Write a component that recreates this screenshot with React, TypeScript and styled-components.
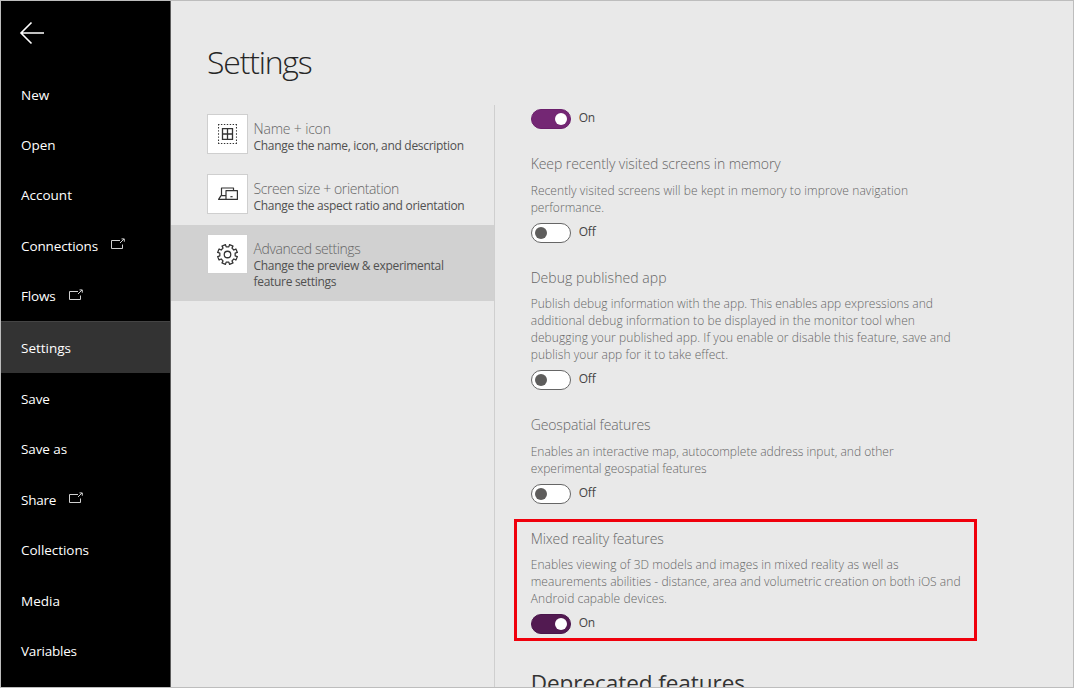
import React from "react";
import styled, { createGlobalStyle, css } from "styled-components";

const GlobalStyle = createGlobalStyle`
  * { box-sizing: border-box; }
  body { margin: 0; overflow: hidden; }
`;

const Frame = styled.div`
  display: flex;
  width: 1074px;
  height: 688px;
  overflow: hidden;
  border: 1px solid #bdbdbd;
  background: #e9e9e9;
  font-family: "Open Sans", "Noto Sans", sans-serif;
`;

const Sidebar = styled.nav`
  flex: none;
  width: 170px;
  background: #000;
  border-right: 1px solid #5c5c5c;
`;

const BackButton = styled.div`
  height: 68px;
  padding: 20px 0 0 18px;
  line-height: 0;
`;

const NavItem = styled.div<{ $active?: boolean }>`
  display: flex;
  align-items: center;
  gap: 13px;
  height: 50.4px;
  padding: 1px 0 0 20px;
  color: #fff;
  font-size: 13.5px;
  white-space: nowrap;
  ${(p) =>
    p.$active &&
    css`
      height: 52px;
      padding-top: 2px;
      margin-bottom: 0.4px;
      background: #333;
      border-top: 1px solid #444;
    `}
  svg { margin-top: -3px; }
`;

const Line = styled.span<{ $track?: number }>`
  display: block;
  width: max-content;
  white-space: nowrap;
  letter-spacing: ${(p) => p.$track ?? 0}px;
`;

const Main = styled.main`
  flex: 1;
  display: flex;
  flex-direction: column;
  min-width: 0;
`;

const Title = styled.h1`
  height: 104px;
  margin: 0;
  padding: 38px 0 0 36px;
  font-size: 32px;
  line-height: 46px;
  font-weight: 300;
  color: #262626;
`;

const Columns = styled.div`
  flex: 1;
  display: flex;
  min-height: 0;
`;

const Categories = styled.div`
  flex: none;
  width: 324px;
  border-right: 1px solid #cfcfcf;
`;

const Category = styled.div<{ $active?: boolean }>`
  display: flex;
  gap: 5.5px;
  height: ${(p) => (p.$active ? 76 : 60)}px;
  padding: 9px 0 0 36px;
  background: ${(p) => (p.$active ? "#d1d1d1" : "transparent")};
`;

const IconTile = styled.div`
  display: flex;
  align-items: center;
  justify-content: center;
  flex: none;
  width: 41px;
  height: 40px;
  background: #fff;
  border: 1px solid #cfcfcf;
`;

const CategoryText = styled.div`
  padding-top: 6px;
  color: #505050;
  font-size: 12px;
  line-height: 16px;
`;

const CategoryName = styled.div`
  height: 17.5px;
  font-size: 14px;
  line-height: 18px;
  font-weight: 300;
  color: #666;
`;

const Features = styled.div`
  flex: 1;
  padding: 4px 0 0 35.7px;
  overflow: hidden;
`;

const Section = styled.section`
  position: relative;
  padding-top: 22px;
`;

const Heading = styled.h2`
  margin: 0;
  height: 24px;
  font-size: 14px;
  line-height: 24px;
  font-weight: 300;
  color: #666;
`;

const Description = styled.div`
  padding: 5.5px 0 7px;
  font-size: 12px;
  line-height: 17px;
  font-weight: 300;
  color: #666;
`;

const ToggleRow = styled.div`
  display: flex;
  gap: 8px;
  height: 20px;
  margin-bottom: 1px;
  font-size: 12px;
  line-height: 17px;
  letter-spacing: -0.2px;
  color: #444;
`;

const Track = styled.span<{ $on?: boolean; $pressed?: boolean }>`
  display: flex;
  align-items: center;
  justify-content: ${(p) => (p.$on ? "flex-end" : "flex-start")};
  width: 40px;
  height: 20px;
  padding: 0 3px;
  border-radius: 10px;
  border: 1px solid ${(p) => (p.$on ? (p.$pressed ? "#4a154b" : "#6b1f6c") : "#666")};
  background: ${(p) => (p.$on ? (p.$pressed ? "#521a51" : "#742774") : "#fff")};
`;

const Knob = styled.span<{ $on?: boolean }>`
  width: 12px;
  height: 12px;
  border-radius: 50%;
  background: ${(p) => (p.$on ? "#fff" : "#5e5d5c")};
`;

const Highlight = styled.div`
  position: absolute;
  left: -16.7px;
  top: 14.5px;
  width: 463px;
  height: 122px;
  border: 3px solid #f0000c;
`;

const GroupTitle = styled.h1`
  margin: 33px 0 0;
  font-size: 22.5px;
  line-height: 32px;
  font-weight: 400;
  color: #333;
`;

const ExternalIcon = () => (
  <svg width="14" height="12" viewBox="0 0 14 12" fill="none" stroke="#d0d0d0" strokeWidth="1">
    <path d="M9 2.5H.5v8h11V6.5M9 5l4-4M10.5 .9h2.8v2.8" />
  </svg>
);

const GridIcon = () => (
  <svg width="19" height="20" viewBox="0 0 19 20" fill="none" stroke="#333">
    <path d="M0 .5h19M0 19.5h19" strokeDasharray="1.4 1.53" strokeWidth="1.1" />
    <path d="M.5 0v20M18.5 0v20" strokeDasharray="1.4 1.7" strokeWidth="1.1" />
    <path d="M4.5 4.6h10v10.8h-10zM9.5 4.6v10.8M4.5 10h10" strokeWidth="1.3" />
  </svg>
);

const DevicesIcon = () => (
  <svg width="20" height="14" viewBox="0 0 20 14" fill="none" stroke="#333" strokeWidth="1.2">
    <path d="M3.5 8.6V1h12v2.5M7.5 8.6H3L.6 12.4h7M8 3.6h11.4v8.8H8z" strokeLinejoin="round" />
    <path d="M12.4 9.7h2.2" />
  </svg>
);

const GearIcon = () => {
  const teeth = 8;
  const points: string[] = [];
  for (let i = 0; i < teeth; i++) {
    const base = ((i + 0.5) * 2 * Math.PI) / teeth;
    [[-0.22, 7.4], [-0.19, 9.6], [0.19, 9.6], [0.22, 7.4]].forEach(([a, r]) => {
      points.push(`${(10 + r * Math.sin(base + a)).toFixed(2)},${(10 - r * Math.cos(base + a)).toFixed(2)}`);
    });
  }
  return (
    <svg width="21" height="21" viewBox="0 0 20 20" fill="none" stroke="#333" strokeWidth="1.2" strokeLinejoin="round">
      <polygon points={points.join(" ")} />
      <circle cx="10" cy="10" r="3.1" />
    </svg>
  );
};

type TextLine = [text: string, track: number];

const Lines = ({ items }: { items: TextLine[] }) => (
  <>
    {items.map(([text, track]) => (
      <Line key={text} $track={track}>{text}</Line>
    ))}
  </>
);

const Toggle = ({ on, pressed }: { on?: boolean; pressed?: boolean }) => (
  <ToggleRow>
    <Track $on={on} $pressed={pressed}><Knob $on={on} /></Track>
    {on ? "On" : "Off"}
  </ToggleRow>
);

const nav: { label: string; track: number; external?: boolean; active?: boolean }[] = [
  { label: "New", track: 0 },
  { label: "Open", track: 0 },
  { label: "Account", track: 0 },
  { label: "Connections", track: -0.12, external: true },
  { label: "Flows", track: -0.15, external: true },
  { label: "Settings", track: 0, active: true },
  { label: "Save", track: -0.1 },
  { label: "Save as", track: -0.1 },
  { label: "Share", track: -0.25, external: true },
  { label: "Collections", track: -0.05 },
  { label: "Media", track: 0 },
  { label: "Variables", track: -0.2 },
];

const categories: { name: TextLine; icon: React.ReactNode; lines: TextLine[]; active?: boolean }[] = [
  { name: ["Name + icon", -0.17], icon: <GridIcon />, lines: [["Change the name, icon, and description", -0.3]] },
  { name: ["Screen size + orientation", -0.4], icon: <DevicesIcon />, lines: [["Change the aspect ratio and orientation", -0.29]] },
  {
    name: ["Advanced settings", -0.42],
    icon: <GearIcon />,
    active: true,
    lines: [["Change the preview & experimental", -0.3], ["feature settings", -0.3]],
  },
];

const features: { title: TextLine; lines: TextLine[]; on?: boolean }[] = [
  {
    title: ["Keep recently visited screens in memory", -0.07],
    lines: [["Recently visited screens will be kept in memory to improve navigation", 0.08], ["performance.", 0.04]],
  },
  {
    title: ["Debug published app", 0.05],
    lines: [
      ["Publish debug information with the app. This enables app expressions and", 0.02],
      ["additional debug information to be displayed in the monitor tool when", 0.09],
      ["debugging your published app. If you enable or disable this feature, save and", 0.09],
      ["publish your app for it to take effect.", 0.06],
    ],
  },
  {
    title: ["Geospatial features", -0.13],
    lines: [["Enables an interactive map, autocomplete address input, and other", 0.02], ["experimental geospatial features", -0.02]],
  },
  {
    title: ["Mixed reality features", -0.11],
    on: true,
    lines: [
      ["Enables viewing of 3D models and images in mixed reality as well as", 0.07],
      ["meaurements abilities - distance, area and volumetric creation on both iOS and", 0.05],
      ["Android capable devices.", 0.1],
    ],
  },
];

export default function App() {
  return (
    <Frame>
      <GlobalStyle />
      <Sidebar>
        <BackButton>
          <svg width="26" height="24" viewBox="0 0 26 24" fill="none" stroke="#fff" strokeWidth="1.6">
            <path d="M25 12H2M12.5 1.5L2 12l10.5 10.5" />
          </svg>
        </BackButton>
        {nav.map((item) => (
          <NavItem key={item.label} $active={item.active}>
            <Line $track={item.track}>{item.label}</Line>
            {item.external && <ExternalIcon />}
          </NavItem>
        ))}
      </Sidebar>
      <Main>
        <Title><Line $track={-1.2}>Settings</Line></Title>
        <Columns>
          <Categories>
            {categories.map((c) => (
              <Category key={c.name[0]} $active={c.active}>
                <IconTile>{c.icon}</IconTile>
                <CategoryText>
                  <CategoryName><Lines items={[c.name]} /></CategoryName>
                  <Lines items={c.lines} />
                </CategoryText>
              </Category>
            ))}
          </Categories>
          <Features>
            <Toggle on />
            {features.map((f) => (
              <Section key={f.title[0]}>
                <Heading><Lines items={[f.title]} /></Heading>
                <Description><Lines items={f.lines} /></Description>
                <Toggle on={f.on} pressed={f.on} />
                {f.on && <Highlight />}
              </Section>
            ))}
            <GroupTitle><Line $track={-0.05}>Deprecated features</Line></GroupTitle>
          </Features>
        </Columns>
      </Main>
    </Frame>
  );
}
